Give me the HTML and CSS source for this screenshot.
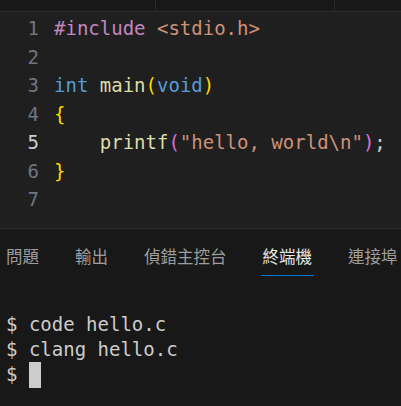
FILE: index.html
```html
<!DOCTYPE html>
<html lang="zh-Hant">
<head>
    <meta charset="UTF-8">
    <meta name="viewport" content="width=device-width, initial-scale=1.0">
    <title>hello.c</title>
    <link rel="stylesheet" href="styles.css">
</head>
<body>
    <div class="tab-strip">
        <div class="tab tab-first"></div>
        <div class="tab tab-second"></div>
    </div>

    <div class="editor">
        <div class="line"><span class="num">1</span><span class="code"><span class="kw-pre">#include</span> <span class="str">&lt;stdio.h&gt;</span></span></div>
        <div class="line"><span class="num">2</span><span class="code"></span></div>
        <div class="line"><span class="num">3</span><span class="code"><span class="kw">int</span> <span class="fn">main</span><span class="br1">(</span><span class="kw">void</span><span class="br1">)</span></span></div>
        <div class="line"><span class="num">4</span><span class="code"><span class="br1">{</span></span></div>
        <div class="line active"><span class="num">5</span><span class="code">    <span class="fn">printf</span><span class="br2">(</span><span class="str">"hello, world\n"</span><span class="br2">)</span>;</span></div>
        <div class="line"><span class="num">6</span><span class="code"><span class="br1">}</span></span></div>
        <div class="line"><span class="num">7</span><span class="code"></span></div>
    </div>

    <div class="panel">
        <div class="panel-tabs">
            <span class="panel-tab">問題</span>
            <span class="panel-tab">輸出</span>
            <span class="panel-tab">偵錯主控台</span>
            <span class="panel-tab selected">終端機</span>
            <span class="panel-tab">連接埠</span>
        </div>
        <div class="terminal">
            <div class="term-line">$ code hello.c</div>
            <div class="term-line">$ clang hello.c</div>
            <div class="term-line">$ <span class="cursor"></span></div>
        </div>
    </div>
</body>
</html>
```

FILE: styles.css
```css
body {
    margin: 0;
    width: 401px;
    height: 406px;
    overflow: hidden;
    background-color: #181818;
    font-family: "DejaVu Sans Mono", monospace;
}
.tab-strip {
    height: 11px;
    display: flex;
    border-bottom: 1px solid #2b2b2b;
    background-color: #181818;
}
.tab {
    border-right: 1px solid #2b2b2b;
}
.tab-first {
    width: 155px;
}
.tab-second {
    width: 178px;
}
.editor {
    height: 217px;
    padding-top: 2px;
    box-sizing: border-box;
    background-color: #1f1f1f;
    border-bottom: 1px solid #2b2b2b;
    font-size: 19px;
}
.line {
    display: flex;
    height: 28.5px;
    line-height: 28.5px;
    white-space: pre;
}
.num {
    width: 39px;
    text-align: right;
    color: #6e7681;
    margin-right: 15px;
}
.line.active .num {
    color: #cccccc;
}
.code {
    color: #cccccc;
}
.kw-pre { color: #c586c0; }
.kw { color: #569cd6; }
.fn { color: #dcdcaa; }
.str { color: #ce9178; }
.br1 { color: #ffd700; }
.br2 { color: #da70d6; }
.panel-tabs {
    display: flex;
    gap: 36px;
    padding: 10px 0 0 6px;
    height: 43px;
    box-sizing: border-box;
    align-items: center;
    font-family: "Noto Sans CJK TC", sans-serif;
    font-size: 16.5px;
}
.panel-tab {
    color: #9d9d9d;
    position: relative;
}
.panel-tab.selected {
    color: #e7e7e7;
}
.panel-tab.selected::after {
    content: "";
    position: absolute;
    left: -2px;
    right: -2px;
    bottom: -8px;
    height: 1px;
    background-color: #0078d4;
}
.terminal {
    padding: 40px 0 0 6px;
    font-size: 19px;
    color: #cccccc;
}
.term-line {
    height: 25px;
    line-height: 25px;
    white-space: pre;
    display: flex;
    align-items: center;
}
.cursor {
    display: inline-block;
    width: 12px;
    height: 26px;
    background-color: #cccccc;
}
```
